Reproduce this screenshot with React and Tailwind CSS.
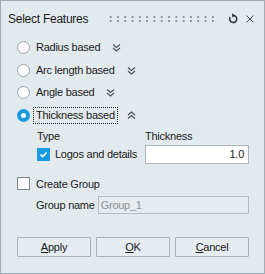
import React, { useState } from "react";

const font = { fontFamily: '"Liberation Sans", Arial, sans-serif' };

// Doble chevron (abajo o arriba)
const DoubleChevron = ({ up = false }) => (
  <svg width="9" height="9" viewBox="0 0 9 9" className={up ? "rotate-180" : ""}>
    <path d="M1 1.5 L4.5 4.5 L8 1.5" fill="none" stroke="#4a4f55" strokeWidth="1.1" />
    <path d="M1 5 L4.5 8 L8 5" fill="none" stroke="#4a4f55" strokeWidth="1.1" />
  </svg>
);

const Radio = ({ checked }) =>
  checked ? (
    <span className="shrink-0 w-[13px] h-[13px] rounded-full bg-[#1a9be0] flex items-center justify-center">
      <span className="w-[5px] h-[5px] rounded-full bg-white" />
    </span>
  ) : (
    <span className="shrink-0 w-[13px] h-[13px] rounded-full bg-white border border-[#9aa1a8]" />
  );

const Check = ({ checked }) =>
  checked ? (
    <span className="shrink-0 w-[13px] h-[13px] bg-[#1a9be0] flex items-center justify-center">
      <svg width="9" height="9" viewBox="0 0 9 9">
        <path d="M1.5 4.5 L3.6 6.6 L7.6 2.4" fill="none" stroke="white" strokeWidth="1.5" />
      </svg>
    </span>
  ) : (
    <span className="shrink-0 w-[13px] h-[13px] bg-white border border-[#7d848b]" />
  );

const App = () => {
  const [mode, setMode] = useState("thickness");

  const options = [
    { id: "radius", label: "Radius based", gap: "ml-[10px]" },
    { id: "arc", label: "Arc length based", gap: "ml-[10px]" },
    { id: "angle", label: "Angle based", gap: "ml-[10px]" },
    { id: "thickness", label: "Thickness based", gap: "ml-[10px]" },
  ];

  return (
    <div
      className="w-[265px] h-[274px] border border-[#a4acb3] bg-[#e3eaee] text-[11px] tracking-[-0.25px] text-[#1a1a1a] flex flex-col whitespace-nowrap"
      style={font}
    >
      {/* Cabecera */}
      <div className="h-[35px] flex items-center pl-[7px] pr-[9px]">
        <span className="text-[12px] w-[90px] shrink-0">Select Features</span>
        <div className="ml-[9px] w-[110px] h-[8px] bg-[radial-gradient(circle,#8b9197_0.8px,transparent_1.1px)] bg-[length:7.3px_4px]" />
        <svg width="12" height="12" viewBox="0 0 12 12" className="ml-[12px]">
          <path d="M3.2 4.2 A3.6 3.6 0 1 0 6 2.4" fill="none" stroke="#2f3337" strokeWidth="1.6" />
          <path d="M5.2 0.2 L8.2 2.5 L5.2 4.6 Z" fill="#2f3337" />
        </svg>
        <svg width="10" height="10" viewBox="0 0 10 10" className="ml-[6px]">
          <path d="M1.5 1.5 L8.5 8.5 M8.5 1.5 L1.5 8.5" stroke="#3a3e42" strokeWidth="1" />
        </svg>
      </div>

      {/* Opciones */}
      <div className="flex flex-col pl-[16px]">
        {options.map((o) => (
          <div
            key={o.id}
            className="h-[22.7px] flex items-center cursor-pointer"
            onClick={() => setMode(o.id)}
          >
            <Radio checked={mode === o.id} />
            <span
              className={
                "ml-[4px] px-[2px] leading-[15px] " +
                (mode === o.id ? "outline outline-1 outline-dotted outline-[#222]" : "")
              }
            >
              {o.label}
            </span>
            <span className={o.gap + " flex"}>
              <DoubleChevron up={mode === o.id} />
            </span>
          </div>
        ))}
      </div>

      {/* Detalles */}
      <div className="pl-[36px] pr-[15px]">
        <div className="flex h-[18px] items-center">
          <span className="w-[108px]">Type</span>
          <span>Thickness</span>
        </div>
        <div className="flex h-[19px] items-center">
          <div className="w-[108px] flex items-center">
            <Check checked />
            <span className="ml-[5px]">Logos and details</span>
          </div>
          <div className="flex-1 h-[19px] bg-white border border-[#acb3b9] flex items-center justify-end pr-[4px]">
            1.0
          </div>
        </div>
      </div>

      <div className="pl-[16px] mt-[11px] h-[18px] flex items-center">
        <Check checked={false} />
        <span className="ml-[6px]">Create Group</span>
      </div>

      <div className="flex items-center pl-[35px] pr-[15px] mt-[3px] h-[18px]">
        <span>Group name</span>
        <div className="ml-[3px] flex-1 h-[18px] border border-[#b5bbc0] bg-[#e6ecef] text-[#8c9297] flex items-center pl-[2px]">
          Group_1
        </div>
      </div>

      {/* Botones */}
      <div className="flex gap-[5px] pl-[16px] pr-[15px] mt-[23px]">
        <button className="w-[75px] h-[20px] border border-[#acb1b5] bg-[#e6ecef] rounded-[1px]">
          <span className="underline">A</span>pply
        </button>
        <button className="w-[75px] h-[20px] border border-[#acb1b5] bg-[#e6ecef] rounded-[1px]">
          <span className="underline">O</span>K
        </button>
        <button className="w-[75px] h-[20px] border border-[#acb1b5] bg-[#e6ecef] rounded-[1px]">
          <span className="underline">C</span>ancel
        </button>
      </div>
    </div>
  );
};

export default App;
